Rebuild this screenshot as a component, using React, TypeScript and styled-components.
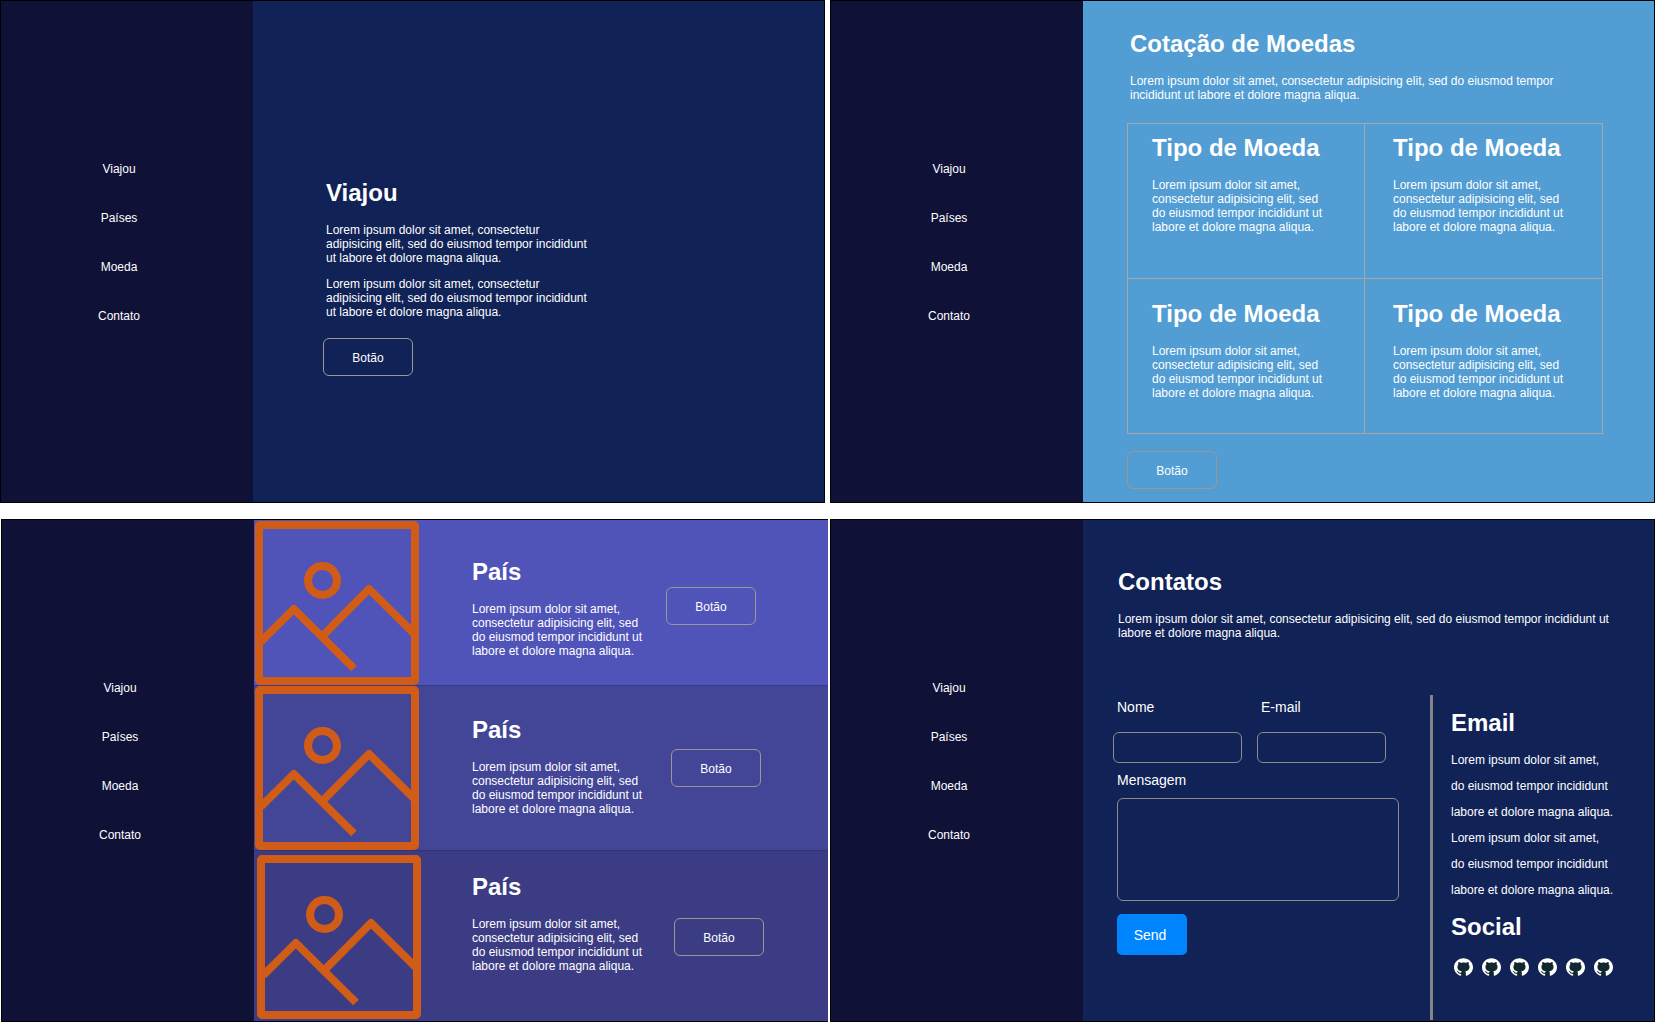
import React from "react";
import styled, { createGlobalStyle } from "styled-components";

const GlobalStyle = createGlobalStyle`
  *, *::before, *::after {
    box-sizing: border-box;
  }
  body {
    margin: 0;
    background: #ffffff;
    color: #ffffff;
    font-family: "Liberation Sans", Arial, Helvetica, sans-serif;
    font-size: 12px;
    line-height: 14px;
  }
`;

const Board = styled.div`
  min-height: 100vh;
  display: grid;
  grid-template-rows: 1fr 1fr;
  gap: 16px;
`;

const BoardRow = styled.div<{ $shifted?: boolean }>`
  display: grid;
  grid-template-columns: ${(p) =>
    p.$shifted ? "minmax(0, 827fr) minmax(0, 825fr)" : "minmax(0, 1fr) minmax(0, 1fr)"};
  gap: ${(p) => (p.$shifted ? "2px" : "5px")};
  padding-left: ${(p) => (p.$shifted ? "1px" : "0")};
`;

const Screen = styled.section<{ $bg: string; $openRight?: boolean }>`
  display: grid;
  grid-template-columns: 252px minmax(0, 1fr);
  background: ${(p) => p.$bg};
  border: 1px solid #000000;
  border-right-width: ${(p) => (p.$openRight ? "0" : "1px")};
`;

const Sidebar = styled.nav`
  display: flex;
  flex-direction: column;
  align-items: center;
  gap: 35px;
  padding: 161px 16px 0 0;
  background: #0f1136;
`;

const NavLink = styled.a`
  color: inherit;
  text-decoration: none;
`;

const Title = styled.h2`
  margin: 0 0 16px;
  font-size: 24px;
  line-height: 28px;
  font-weight: bold;
`;

const Text = styled.p`
  margin: 0;
  & + & {
    margin-top: 12px;
  }
`;

const TextBlock = styled.div<{ $width: number; $indent?: number }>`
  width: ${(p) => p.$width}px;
  max-width: 100%;
  margin-left: ${(p) => p.$indent ?? 0}px;
`;

const OutlineButton = styled.button`
  width: 90px;
  height: 38px;
  flex: none;
  padding: 2px 0 0;
  border: 1px solid #9b9892;
  border-radius: 6px;
  background: transparent;
  color: inherit;
  font: inherit;
  cursor: pointer;
`;

const HomeMain = styled.div`
  display: flex;
  flex-direction: column;
  align-items: flex-start;
  gap: 19px;
  padding: 178px 24px 24px 70px;
`;

const CurrencyMain = styled.div`
  display: flex;
  flex-direction: column;
  align-items: flex-start;
  padding: 29px 51px 13px 44px;
`;

const CurrencyGrid = styled.div`
  align-self: stretch;
  display: grid;
  grid-template-columns: 237fr 238fr;
  grid-auto-rows: 155px;
  margin: 21px 0 17px;
  border: solid #aaa6a6;
  border-width: 1px 0 0 1px;
`;

const CurrencyCell = styled.article`
  padding: 10px 0 0 24px;
  border: solid #aaa6a6;
  border-width: 0 1px 1px 0;
  &:nth-child(even) {
    padding-left: 28px;
  }
  &:nth-child(n + 3) {
    padding-top: 21px;
  }
`;

const CountryList = styled.div`
  display: grid;
  grid-template-rows: 165px 165px minmax(171px, 1fr);
`;

const CountryRow = styled.article<{ $bg: string; $top: number; $left: number }>`
  display: flex;
  align-items: flex-start;
  padding: ${(p) => p.$top}px 0 0 ${(p) => p.$left}px;
  background: ${(p) => p.$bg};
  & + & {
    box-shadow: inset 0 1px 0 rgba(20, 20, 70, 0.2);
  }
`;

const CountryPicture = styled.svg`
  width: 164px;
  height: 164px;
  flex: none;
`;

const CountryText = styled.div<{ $top: number; $left: number }>`
  width: 176px;
  margin: ${(p) => p.$top}px 0 0 ${(p) => p.$left}px;
`;

const CountryAction = styled.div<{ $top: number; $left: number }>`
  padding: ${(p) => p.$top}px 0 0 ${(p) => p.$left}px;
`;

const ContactMain = styled.div`
  display: flex;
  flex-direction: column;
  padding: 48px 0 1px 30px;
`;

const ContactBody = styled.div`
  flex: 1;
  display: flex;
  justify-content: space-between;
  margin-top: 55px;
`;

const Form = styled.form`
  display: flex;
  flex-direction: column;
  align-items: flex-start;
  padding-top: 4px;
`;

const FieldRow = styled.div`
  display: flex;
  gap: 15px;
`;

const Field = styled.div`
  display: flex;
  flex-direction: column;
`;

const Label = styled.label<{ $gap: number; $indent: number }>`
  margin-bottom: ${(p) => p.$gap}px;
  padding-left: ${(p) => p.$indent}px;
  font-size: 14px;
  line-height: 16px;
`;

const Input = styled.input`
  width: 129px;
  height: 31px;
  padding: 0 8px;
  border: 1px solid #8d8b8a;
  border-radius: 6px;
  background: transparent;
  color: inherit;
  font: inherit;
`;

const MessageField = styled(Field)`
  margin: 9px 0 13px 4px;
`;

const TextArea = styled.textarea`
  width: 282px;
  height: 103px;
  padding: 8px;
  border: 1px solid #8d8b8a;
  border-radius: 6px;
  background: transparent;
  color: inherit;
  font: inherit;
  resize: none;
`;

const SendButton = styled.button`
  width: 70px;
  height: 41px;
  margin-left: 4px;
  padding: 1px 4px 0 0;
  border: 0;
  border-radius: 5px;
  background: #0085ff;
  color: inherit;
  font-family: inherit;
  font-size: 14px;
  line-height: 16px;
  cursor: pointer;
`;

const Aside = styled.aside`
  width: 224px;
  padding: 14px 0 0 18px;
  border-left: 3px solid #858489;
`;

const SocialTitle = styled(Title)`
  margin-top: 16px;
`;

const SocialRow = styled.div`
  display: flex;
  gap: 10px;
  padding: 1px 0 0 3px;
`;

const SocialLink = styled.a`
  display: block;
  width: 18px;
  height: 18px;
`;

const NAV = ["Viajou", "Países", "Moeda", "Contato"];

const LOREM =
  "Lorem ipsum dolor sit amet, consectetur adipisicing elit, sed do eiusmod tempor incididunt ut labore et dolore magna aliqua.";

const COUNTRIES = [
  { bg: "#5053b7", top: 1, left: 1, textTop: 37, textLeft: 53, buttonTop: 66, buttonLeft: 18 },
  { bg: "#434597", top: 1, left: 1, textTop: 30, textLeft: 53, buttonTop: 63, buttonLeft: 23 },
  { bg: "#3b3c84", top: 5, left: 3, textTop: 18, textLeft: 51, buttonTop: 63, buttonLeft: 26 },
];

const CONTACT_LINES = [
  "Lorem ipsum dolor sit amet,",
  "do eiusmod tempor incididunt",
  "labore et dolore magna aliqua.",
];

function SideNav() {
  return (
    <Sidebar>
      {NAV.map((item) => (
        <NavLink key={item} href="#">
          {item}
        </NavLink>
      ))}
    </Sidebar>
  );
}

function Picture() {
  return (
    <CountryPicture viewBox="0 0 164 164" fill="none" stroke="#d05c17" strokeWidth="8" aria-hidden="true">
      <rect x="4" y="4" width="156" height="156" rx="1" strokeLinejoin="round" />
      <circle cx="67.5" cy="59.5" r="14.5" />
      <path d="M6 120.5 L38.8 88 L99 147.5" strokeLinejoin="round" />
      <path d="M67.5 115 L114 68 L159 112.5" strokeLinejoin="round" />
    </CountryPicture>
  );
}

function GithubMark() {
  return (
    <svg width="19" height="18" viewBox="0 0 24 24" preserveAspectRatio="none" aria-hidden="true">
      <circle cx="12" cy="12" r="12" fill="#10282f" />
      <path
        fill="#ffffff"
        d="M12 .297c-6.63 0-12 5.373-12 12 0 5.303 3.438 9.8 8.205 11.385.6.113.82-.258.82-.577 0-.285-.01-1.04-.015-2.04-3.338.724-4.042-1.61-4.042-1.61C4.422 18.07 3.633 17.7 3.633 17.7c-1.087-.744.084-.729.084-.729 1.205.084 1.838 1.236 1.838 1.236 1.07 1.835 2.809 1.305 3.495.998.108-.776.417-1.305.76-1.605-2.665-.3-5.466-1.332-5.466-5.93 0-1.31.465-2.38 1.235-3.22-.135-.303-.54-1.523.105-3.176 0 0 1.005-.322 3.3 1.23.96-.267 1.98-.399 3-.405 1.02.006 2.04.138 3 .405 2.28-1.552 3.285-1.23 3.285-1.23.645 1.653.24 2.873.12 3.176.765.84 1.23 1.91 1.23 3.22 0 4.61-2.805 5.625-5.475 5.92.42.36.81 1.096.81 2.22 0 1.606-.015 2.896-.015 3.286 0 .315.21.69.825.57C20.565 22.092 24 17.592 24 12.297c0-6.627-5.373-12-12-12"
      />
    </svg>
  );
}

function HomeScreen() {
  return (
    <Screen $bg="#102256">
      <SideNav />
      <HomeMain>
        <TextBlock $width={270} $indent={3}>
          <Title>Viajou</Title>
          <Text>{LOREM}</Text>
          <Text>{LOREM}</Text>
        </TextBlock>
        <OutlineButton type="button">Botão</OutlineButton>
      </HomeMain>
    </Screen>
  );
}

function CurrencyScreen() {
  return (
    <Screen $bg="#529dd3">
      <SideNav />
      <CurrencyMain>
        <TextBlock $width={450} $indent={3}>
          <Title>Cotação de Moedas</Title>
          <Text>{LOREM}</Text>
        </TextBlock>
        <CurrencyGrid>
          {[0, 1, 2, 3].map((i) => (
            <CurrencyCell key={i}>
              <TextBlock $width={176}>
                <Title>Tipo de Moeda</Title>
                <Text>{LOREM}</Text>
              </TextBlock>
            </CurrencyCell>
          ))}
        </CurrencyGrid>
        <OutlineButton type="button">Botão</OutlineButton>
      </CurrencyMain>
    </Screen>
  );
}

function CountriesScreen() {
  return (
    <Screen $bg="#3b3c84" $openRight>
      <SideNav />
      <CountryList>
        {COUNTRIES.map((c) => (
          <CountryRow key={c.bg} $bg={c.bg} $top={c.top} $left={c.left}>
            <Picture />
            <CountryText $top={c.textTop} $left={c.textLeft}>
              <Title>País</Title>
              <Text>{LOREM}</Text>
            </CountryText>
            <CountryAction $top={c.buttonTop} $left={c.buttonLeft}>
              <OutlineButton type="button">Botão</OutlineButton>
            </CountryAction>
          </CountryRow>
        ))}
      </CountryList>
    </Screen>
  );
}

function ContactScreen() {
  return (
    <Screen $bg="#102256">
      <SideNav />
      <ContactMain>
        <TextBlock $width={504} $indent={5}>
          <Title>Contatos</Title>
          <Text>{LOREM}</Text>
        </TextBlock>
        <ContactBody>
          <Form onSubmit={(e) => e.preventDefault()}>
            <FieldRow>
              <Field>
                <Label htmlFor="nome" $gap={17} $indent={4}>Nome</Label>
                <Input id="nome" type="text" />
              </Field>
              <Field>
                <Label htmlFor="email" $gap={17} $indent={4}>E-mail</Label>
                <Input id="email" type="email" />
              </Field>
            </FieldRow>
            <MessageField>
              <Label htmlFor="mensagem" $gap={10} $indent={0}>Mensagem</Label>
              <TextArea id="mensagem" />
            </MessageField>
            <SendButton type="submit">Send</SendButton>
          </Form>
          <Aside>
            <Title>Email</Title>
            {[...CONTACT_LINES, ...CONTACT_LINES].map((line, i) => (
              <Text key={i}>{line}</Text>
            ))}
            <SocialTitle>Social</SocialTitle>
            <SocialRow>
              {[0, 1, 2, 3, 4, 5].map((i) => (
                <SocialLink key={i} href="#" aria-label="GitHub">
                  <GithubMark />
                </SocialLink>
              ))}
            </SocialRow>
          </Aside>
        </ContactBody>
      </ContactMain>
    </Screen>
  );
}

export default function App() {
  return (
    <>
      <GlobalStyle />
      <Board>
        <BoardRow>
          <HomeScreen />
          <CurrencyScreen />
        </BoardRow>
        <BoardRow $shifted>
          <CountriesScreen />
          <ContactScreen />
        </BoardRow>
      </Board>
    </>
  );
}
